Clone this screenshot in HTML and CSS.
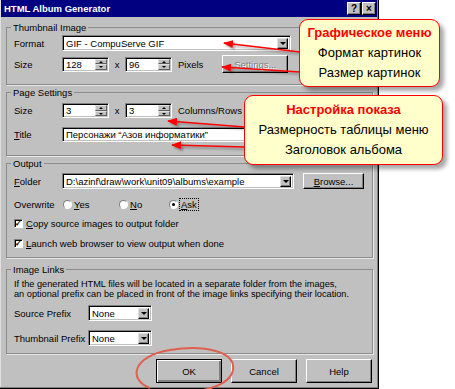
FILE: index.html
```html
<!DOCTYPE html>
<html>

<head>
    <meta charset="utf-8">
    <title>HTML Album Generator</title>
    <link rel="stylesheet" href="styles.css">
</head>

<body>
    <div id="page">
        <div class="window">
            <div class="titlebar">
                <span class="title">HTML Album Generator</span>
                <span class="tbtn help">?</span>
                <span class="tbtn close">&#215;</span>
            </div>

            <div class="client">
                <fieldset class="group thumb">
                    <legend>Thumbnail Image</legend>
                    <div class="row format-row">
                        <span class="lbl">Format</span>
                        <div class="combo format"><span class="val">GIF - CompuServe GIF</span><span class="drop"></span></div>
                    </div>
                    <div class="row size-row">
                        <span class="lbl">Size</span>
                        <div class="spin"><span class="val">128</span><span class="arrows"><i class="up"></i><i class="down"></i></span></div>
                        <span class="times">x</span>
                        <div class="spin"><span class="val">96</span><span class="arrows"><i class="up"></i><i class="down"></i></span></div>
                        <span class="unit">Pixels</span>
                        <span class="btn settings disabled">Settings...</span>
                    </div>
                </fieldset>

                <fieldset class="group page-settings">
                    <legend>Page Settings</legend>
                    <div class="row">
                        <span class="lbl">Size</span>
                        <div class="spin"><span class="val">3</span><span class="arrows"><i class="up"></i><i class="down"></i></span></div>
                        <span class="times">x</span>
                        <div class="spin"><span class="val">3</span><span class="arrows"><i class="up"></i><i class="down"></i></span></div>
                        <span class="unit">Columns/Rows</span>
                    </div>
                    <div class="row title-row">
                        <span class="lbl"><u>T</u>itle</span>
                        <div class="edit title-edit"><span class="val">Персонажи “Азов информатики”</span></div>
                    </div>
                </fieldset>

                <fieldset class="group output">
                    <legend>Output</legend>
                    <div class="row folder-row">
                        <span class="lbl"><u>F</u>older</span>
                        <div class="combo folder"><span class="val">D:\azinf\draw\work\unit09\albums\example</span><span class="drop"></span></div>
                        <span class="btn browse"><span><u>B</u>rowse...</span></span>
                    </div>
                    <div class="row overwrite-row">
                        <span class="lbl">Overwrite</span>
                        <span class="radio yes"><i></i><span><u>Y</u>es</span></span>
                        <span class="radio no"><i></i><span><u>N</u>o</span></span>
                        <span class="radio ask checked"><i></i><span class="focus"><u>A</u>sk</span></span>
                    </div>
                    <div class="row check-row first">
                        <span class="check"><i>&#10003;</i></span>
                        <span><u>C</u>opy source images to output folder</span>
                    </div>
                    <div class="row check-row">
                        <span class="check"><i>&#10003;</i></span>
                        <span><u>L</u>aunch web browser to view output when done</span>
                    </div>
                </fieldset>

                <fieldset class="group links">
                    <legend>Image Links</legend>
                    <p class="note">If the generated HTML files will be located in a separate folder from the images,<br>
                        an optional prefix can be placed in front of the image links specifying their location.</p>
                    <div class="row prefix-row">
                        <span class="lbl wide">Source Prefix</span>
                        <div class="combo prefix"><span class="val">None</span><span class="drop"></span></div>
                    </div>
                    <div class="row prefix-row second">
                        <span class="lbl wide">Thumbnail Prefix</span>
                        <div class="combo prefix"><span class="val">None</span><span class="drop"></span></div>
                    </div>
                </fieldset>

                <div class="buttons">
                    <span class="btn default">OK</span>
                    <span class="btn">Cancel</span>
                    <span class="btn">Help</span>
                </div>
            </div>
        </div>

        <svg class="marks" width="455" height="389" viewBox="0 0 455 389">
            <defs>
                <marker id="head" markerUnits="userSpaceOnUse" markerWidth="10" markerHeight="8" refX="9" refY="4" orient="auto">
                    <path d="M0,0 L10,4 L0,8 z" fill="#f00"></path>
                </marker>
            </defs>
            <g class="arrow-lines">
                <line x1="300" y1="52" x2="224" y2="43" marker-end="url(#head)"></line>
                <line x1="300" y1="72" x2="222" y2="67" marker-end="url(#head)"></line>
                <line x1="245" y1="127" x2="168" y2="121" marker-end="url(#head)"></line>
                <line x1="245" y1="147" x2="172" y2="145" marker-end="url(#head)"></line>
            </g>
            <path class="ring" d="M150,388 C128,380 132,356 170,350 C205,344 236,352 233,370 C230,386 200,394 170,392"></path>
        </svg>

        <div class="callout graphics">
            <div class="head">Графическое меню</div>
            <div>Формат картинок</div>
            <div>Размер картинок</div>
        </div>

        <div class="callout display">
            <div class="head">Настройка показа</div>
            <div>Размерность таблицы меню</div>
            <div>Заголовок альбома</div>
        </div>
    </div>
</body>

</html>
```

FILE: styles.css
```css
html,
body {
    margin: 0;
}

body {
    background-color: white;
    font-family: "Liberation Sans", Arial, sans-serif;
    font-size: 9.5px;
    color: black;
}

#page {
    position: relative;
    width: 455px;
    height: 389px;
    overflow: hidden;
}

/* dialog window */

.window {
    width: 378px;
    height: 388px;
    background-color: #c0c0c0;
    border-right: 1px solid #000;
    border-bottom: 1px solid #000;
    box-shadow: inset -1px -1px #808080, inset 1px 0 #dfdfdf;
    display: flex;
    flex-direction: column;
}

.titlebar {
    margin: 0 1px;
    height: 17px;
    padding: 0 1px 0 3px;
    background-color: #000080;
    color: white;
    font-weight: bold;
    font-size: 9.5px;
    display: flex;
    align-items: center;
    gap: 1px;
}

.title {
    margin-right: auto;
}

.tbtn {
    width: 12px;
    height: 11px;
    background-color: #c0c0c0;
    color: black;
    border: 1px solid;
    border-color: #fff #000 #000 #fff;
    box-shadow: inset -1px -1px #808080;
    font-size: 10px;
    line-height: 11px;
    text-align: center;
}

.client {
    flex: 1;
    padding: 5px 5px 0 6px;
    display: flex;
    flex-direction: column;
}

/* group boxes */

.group {
    margin: 0;
    padding: 0 7px;
    min-width: 0;
    border: 1px solid #8c8c8c;
    box-shadow: 1px 1px 0 #e8e8e8;
}

.group legend {
    padding: 0 2px;
    margin-left: -3px;
    line-height: 11px;
    height: 11px;
}

.thumb {
    padding-bottom: 11px;
}

.page-settings {
    margin-top: 2px;
    padding-bottom: 13px;
}

.output {
    margin-top: 2px;
    padding-bottom: 7px;
}

.links {
    margin-top: 6px;
    padding-bottom: 7px;
}

.row {
    display: flex;
    align-items: center;
}

.lbl {
    width: 48px;
    flex: none;
}

.lbl.wide {
    width: 74px;
}

.format-row {
    margin-top: 2px;
    height: 16px;
}

.size-row {
    margin-top: 4px;
    height: 18px;
}

.page-settings .row:first-of-type {
    margin-top: 5px;
    height: 15px;
}

.title-row {
    margin-top: 9px;
    height: 15px;
}

.folder-row {
    margin-top: 4px;
    height: 16px;
}

.overwrite-row {
    margin-top: 8px;
    height: 14px;
}

.check-row {
    margin-top: 6px;
    height: 14px;
}

.check-row.first {
    margin-top: 5px;
}

.note {
    margin: 4px 0 0;
    line-height: 10px;
    font-size: 9.2px;
    white-space: nowrap;
}

.prefix-row {
    margin-top: 6px;
    height: 16px;
}

.prefix-row.second {
    margin-top: 9px;
}

/* sunken controls */

.combo,
.edit,
.spin {
    box-sizing: border-box;
    height: 16px;
    background-color: white;
    border: 1px solid;
    border-color: #808080 #fff #fff #808080;
    box-shadow: inset 1px 1px #000, inset -1px -1px #c0c0c0;
    display: flex;
    align-items: center;
    padding: 0 2px 0 3px;
    white-space: nowrap;
    overflow: hidden;
}

.val {
    flex: 1;
    overflow: hidden;
}

.format {
    width: 229px;
}

.title-edit {
    width: 229px;
    height: 15px;
}

.folder {
    width: 232px;
}

.prefix {
    width: 64px;
}

.drop {
    flex: none;
    width: 11px;
    height: 11px;
    box-sizing: border-box;
    background-color: #c0c0c0;
    border: 1px solid;
    border-color: #dfdfdf #000 #000 #dfdfdf;
    box-shadow: inset -1px -1px #808080;
    position: relative;
}

.drop::after {
    content: "";
    position: absolute;
    left: 2px;
    top: 3px;
    border-left: 3px solid transparent;
    border-right: 3px solid transparent;
    border-top: 3px solid #000;
}

.spin {
    width: 47px;
    height: 15px;
    padding-right: 1px;
}

.arrows {
    flex: none;
    width: 12px;
    height: 11px;
    display: flex;
    flex-direction: column;
}

.arrows i {
    flex: 1;
    background-color: #c0c0c0;
    border: 1px solid;
    border-color: #dfdfdf #606060 #606060 #dfdfdf;
    position: relative;
}

.arrows i::after {
    content: "";
    position: absolute;
    left: 3px;
    top: 1px;
    border-left: 2px solid transparent;
    border-right: 2px solid transparent;
}

.arrows .up::after {
    border-bottom: 2px solid #000;
}

.arrows .down::after {
    border-top: 2px solid #000;
}

.times {
    width: 16px;
    text-align: center;
}

.unit {
    margin-left: 6px;
}

/* push buttons */

.btn {
    box-sizing: border-box;
    width: 66px;
    height: 24px;
    background-color: #c0c0c0;
    border: 1px solid;
    border-color: #fff #000 #000 #fff;
    box-shadow: inset -1px -1px #808080;
    display: flex;
    align-items: center;
    justify-content: center;
}

.settings {
    margin-left: 19px;
    height: 18px;
}

.disabled {
    color: #808080;
    text-shadow: 1px 1px #fff;
}

.browse {
    margin-left: 9px;
    width: 61px;
    height: 16px;
}

.buttons {
    margin-top: 5px;
    padding-right: 1px;
    display: flex;
    justify-content: flex-end;
    gap: 9px;
}

.btn.default {
    border-color: #000;
    box-shadow: inset 1px 1px #fff, inset -2px -2px #808080;
}

/* radios and checkboxes */

.radio {
    display: flex;
    align-items: center;
    gap: 2px;
}

.radio i {
    width: 9px;
    height: 9px;
    box-sizing: border-box;
    border-radius: 50%;
    background-color: white;
    border: 1px solid;
    border-color: #808080 #fff #fff #808080;
    position: relative;
}

.radio.checked i::after {
    content: "";
    position: absolute;
    left: 2px;
    top: 2px;
    width: 3px;
    height: 3px;
    border-radius: 50%;
    background-color: #000;
}

.radio.yes {
    width: 56px;
    margin-left: 1px;
}

.radio.no {
    width: 50px;
}

.focus {
    outline: 1px dotted #000;
    padding: 0 1px;
}

.check {
    width: 9px;
    height: 9px;
    box-sizing: border-box;
    margin-right: 3px;
    background-color: white;
    border: 1px solid;
    border-color: #808080 #fff #fff #808080;
    box-shadow: inset 1px 1px #000;
    display: flex;
    align-items: center;
    justify-content: center;
}

.check i {
    font-style: normal;
    font-weight: bold;
    font-size: 8px;
    line-height: 7px;
}

/* annotations over the screenshot */

.marks {
    position: absolute;
    left: 0;
    top: 0;
}

.arrow-lines {
    stroke: #f00;
    stroke-width: 1.5;
    filter: drop-shadow(2px 2px 1px rgba(0, 0, 0, 0.35));
}

.ring {
    fill: none;
    stroke: #e0604f;
    stroke-width: 2;
}

.callout {
    position: absolute;
    box-sizing: border-box;
    background-color: #ffffcc;
    border: 1.5px solid #f00;
    border-radius: 9px;
    box-shadow: 4px 4px 4px rgba(0, 0, 0, 0.35);
    text-align: center;
    font-size: 13px;
    line-height: 20px;
}

.callout .head {
    color: #f00;
    font-weight: bold;
}

.graphics {
    left: 299px;
    top: 19px;
    width: 141px;
    height: 68px;
    padding-top: 3px;
}

.display {
    left: 244px;
    top: 95px;
    width: 199px;
    height: 70px;
    padding-top: 4px;
}
```
